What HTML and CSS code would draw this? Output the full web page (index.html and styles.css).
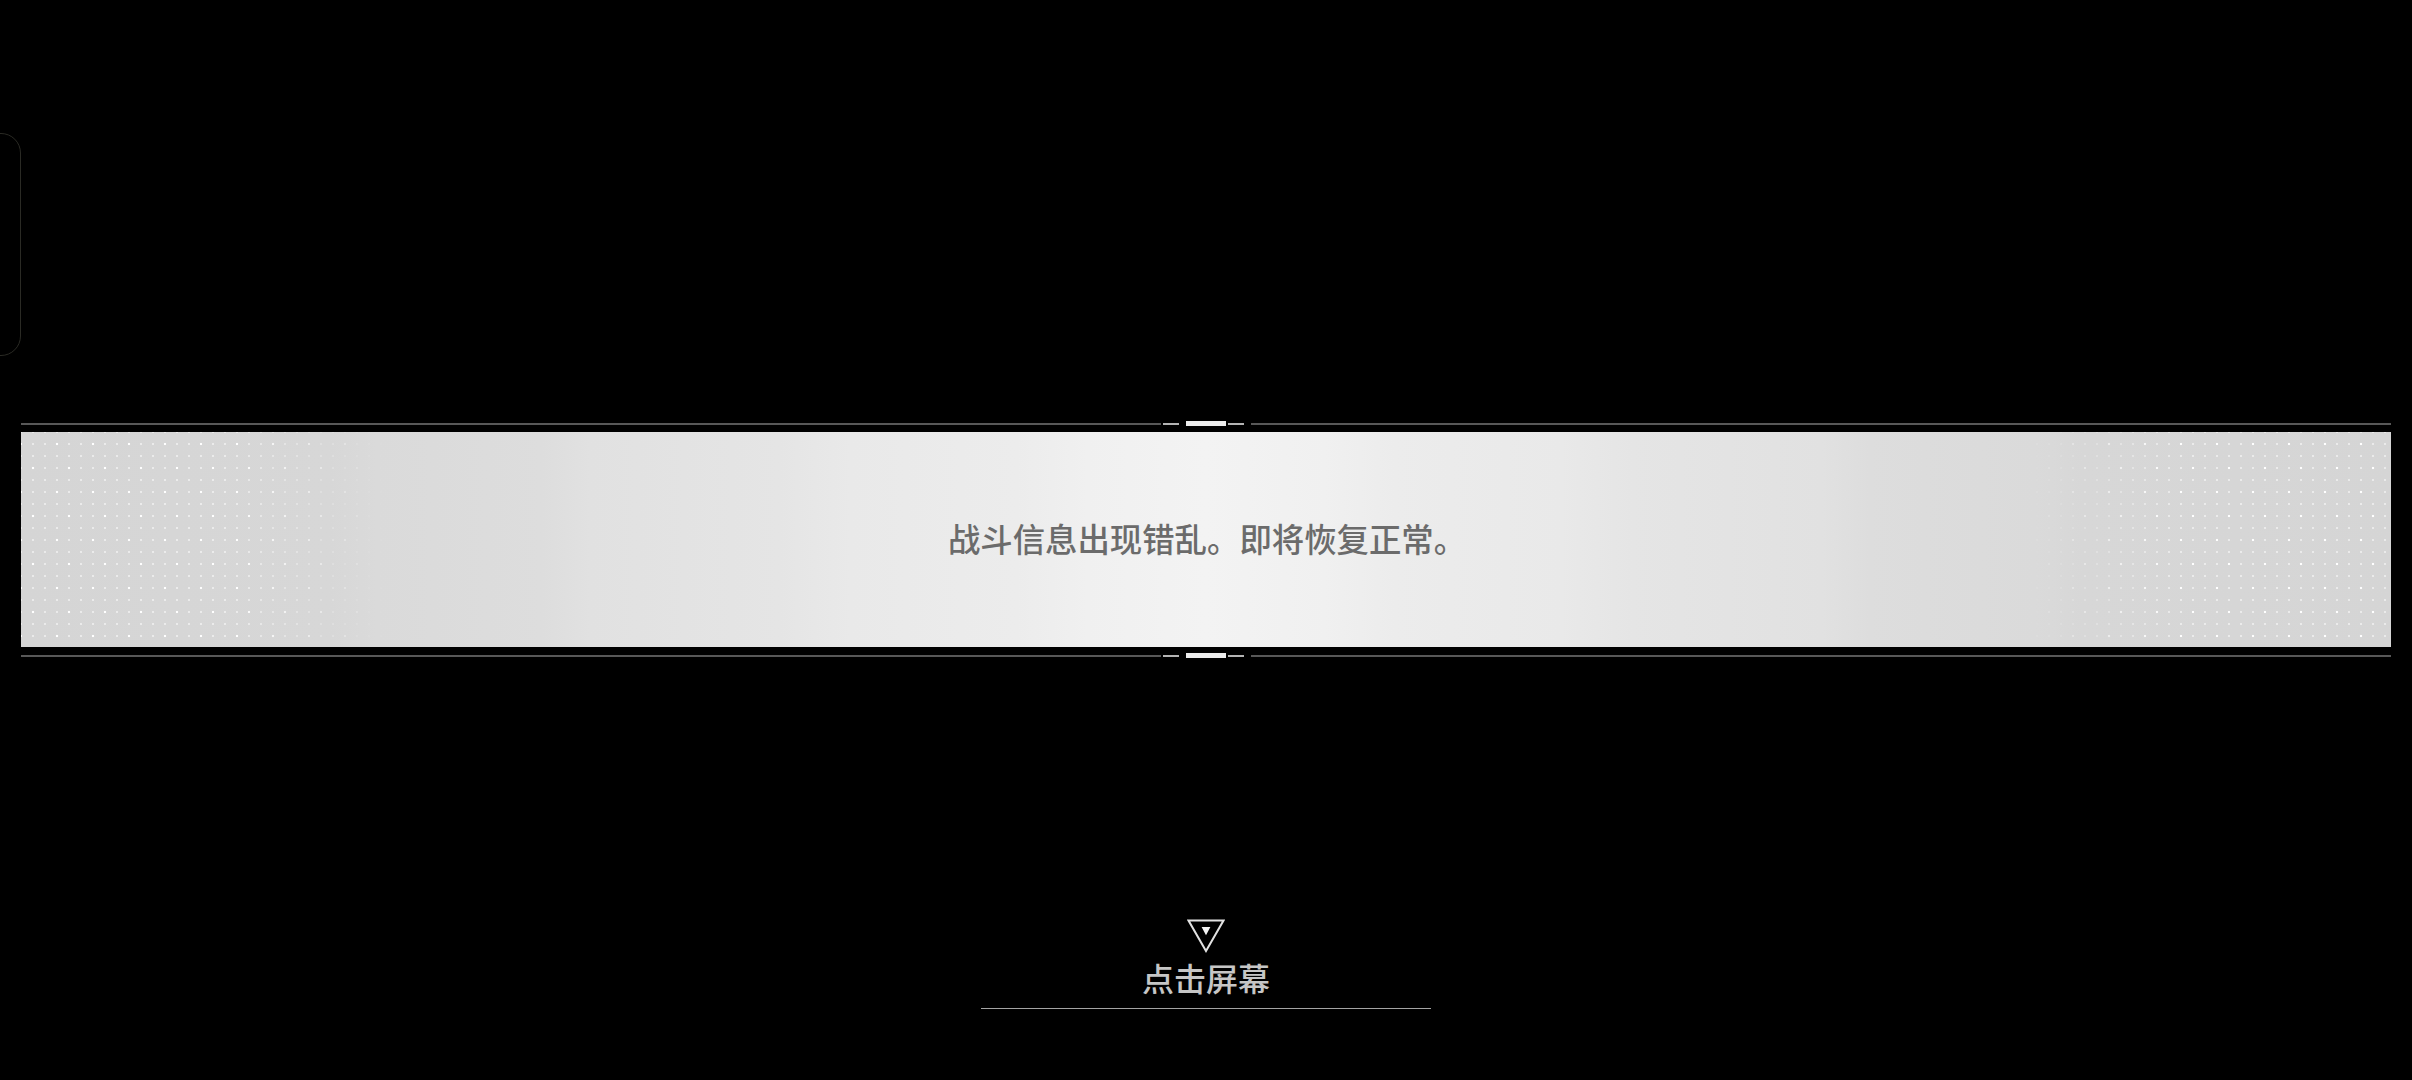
FILE: index.html
```html
<!DOCTYPE html>
<html lang="zh-CN">
<head>
<meta charset="utf-8">
<title>战斗信息</title>
<link rel="stylesheet" href="styles.css">
</head>
<body>
<div class="side-tab"></div>
<main class="screen">
  <section class="banner">
    <div class="rail">
      <span class="rail-line"></span>
      <span class="rail-dash"></span>
      <span class="rail-knob"></span>
      <span class="rail-dash"></span>
      <span class="rail-line"></span>
    </div>
    <div class="band">
      <p class="message">战斗信息出现错乱。即将恢复正常。</p>
    </div>
    <div class="rail">
      <span class="rail-line"></span>
      <span class="rail-dash"></span>
      <span class="rail-knob"></span>
      <span class="rail-dash"></span>
      <span class="rail-line"></span>
    </div>
  </section>
  <section class="prompt">
    <svg class="prompt-icon" width="38" height="34" viewBox="0 0 38 34">
      <polygon points="1.5,1.5 36.5,1.5 19,32" fill="none" stroke="#e2e2e2" stroke-width="2"/>
      <polygon points="14.6,8 23.4,8 19,16.2" fill="#f4f4f4"/>
    </svg>
    <span class="prompt-text">点击屏幕</span>
    <span class="prompt-rule"></span>
  </section>
</main>
</body>
</html>
```
FILE: styles.css
```css
html, body {
  margin: 0;
  padding: 0;
  background: #000;
  overflow: hidden;
}

body {
  width: 2412px;
  height: 1080px;
  position: relative;
  font-family: "Noto Sans CJK SC", "Noto Sans", sans-serif;
}

.side-tab {
  position: absolute;
  left: -21px;
  top: 133px;
  width: 40px;
  height: 221px;
  border: 1px solid #2a2a24;
  border-radius: 20px;
}

.screen {
  height: 1080px;
  box-sizing: border-box;
  padding-top: 421px;
  display: flex;
  flex-direction: column;
  align-items: center;
}

.banner {
  width: 2370px;
  display: flex;
  flex-direction: column;
  gap: 6px;
}

.rail {
  height: 5px;
  display: flex;
  align-items: center;
}

.rail-line {
  flex: 1;
  height: 2px;
  background: #585858;
}

.rail-dash {
  width: 16px;
  height: 2px;
  background: #b4b4b4;
  margin: 0 7px 0 2px;
}

.rail-dash:last-of-type {
  margin: 0 2px 0 7px;
}

.rail-knob {
  width: 40px;
  height: 5px;
  background: #ececec;
}

.band {
  height: 215px;
  position: relative;
  display: flex;
  align-items: center;
  justify-content: center;
  background: linear-gradient(to right,
    #d5d5d5 0%, #d7d7d7 13%, #dadada 15%, #dddddd 22%,
    #e1e1e1 24%, #e5e5e5 32%, #e9e9e9 35%, #ececec 42%,
    #f0f0f0 45%, #f3f3f3 50%, #f0f0f0 55%, #ececec 58%,
    #e9e9e9 65%, #e5e5e5 68%, #e1e1e1 76%, #dddddd 78%,
    #dadada 85%, #d7d7d7 87%, #d5d5d5 100%);
}

.band::before {
  content: "";
  position: absolute;
  inset: 0;
  background-image:
    radial-gradient(circle, #ffffff 0, #ffffff 1px, rgba(255,255,255,0) 1.6px),
    radial-gradient(circle, #ffffff 0, #ffffff 1px, rgba(255,255,255,0) 1.6px),
    radial-gradient(circle, rgba(255,255,255,0.5) 0, rgba(255,255,255,0.5) 1px, rgba(255,255,255,0) 1.6px);
  background-size: 36px 48px, 36px 48px, 12px 12px;
  background-position: 18px -12px, -6px 12px, 6px 6px;
  -webkit-mask-image: linear-gradient(to right, #000 0%, #000 9%, transparent 15.5%, transparent 84.5%, #000 91%, #000 100%);
  mask-image: linear-gradient(to right, #000 0%, #000 9%, transparent 15.5%, transparent 84.5%, #000 91%, #000 100%);
}

.message {
  position: relative;
  margin: 0 0 3px 2px;
  font-size: 32.4px;
  line-height: 1;
  font-weight: 500;
  color: #6b6b6b;
  white-space: nowrap;
}

.prompt {
  margin-top: 261px;
  display: flex;
  flex-direction: column;
  align-items: center;
}

.prompt-icon {
  display: block;
}

.prompt-text {
  margin-top: 8px;
  font-size: 32px;
  line-height: 1;
  font-weight: 500;
  color: #c6c6c6;
}

.prompt-rule {
  margin-top: 15px;
  width: 450px;
  height: 1px;
  background: #a4a4a4;
}
```
